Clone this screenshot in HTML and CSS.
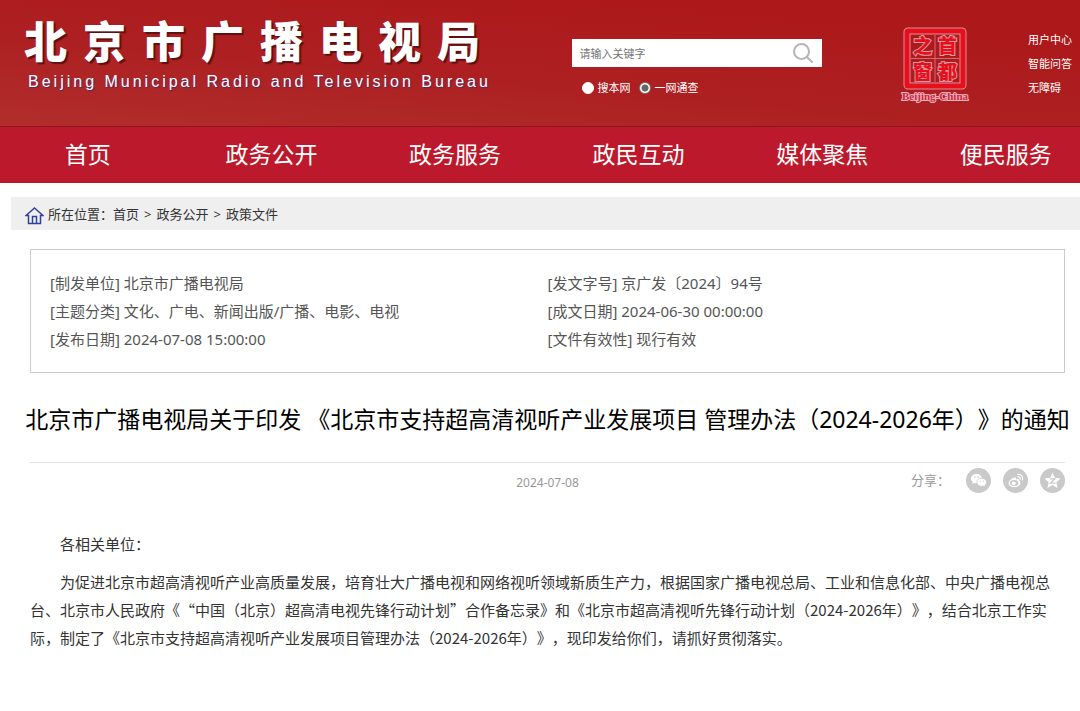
FILE: index.html
```html
<!DOCTYPE html>
<html lang="zh-CN">
<head>
  <meta charset="UTF-8">
  <meta name="viewport" content="width=device-width, initial-scale=1">
  <title>北京市广播电视局</title>
  <link rel="stylesheet" href="styles.css">
</head>
<body>

  <header class="header">
    <div class="brand">
      <div class="brand-cn">北京市广播电视局</div>
      <div class="brand-en">Beijing Municipal Radio and Television Bureau</div>
    </div>

    <form class="search">
      <div class="search-box">
        <input class="search-input" type="text" placeholder="请输入关键字" aria-label="请输入关键字">
        <button class="search-btn" type="button" aria-label="搜索">
          <svg width="22" height="22" viewBox="0 0 22 22" fill="none" stroke="#b5b5b5" stroke-width="2">
            <circle cx="9.500" cy="9.500" r="7.500"/>
            <path d="M15 15l5 5" stroke-linecap="round"/>
          </svg>
        </button>
      </div>
      <div class="search-scope">
        <label><input type="radio" name="scope">搜本网</label>
        <label><input type="radio" name="scope" checked>一网通查</label>
      </div>
    </form>

    <a class="seal" href="#" aria-label="首都之窗">
      <svg width="70" height="78" viewBox="0 0 70 78">
        <rect x="7" y="4" width="56" height="55" rx="1" fill="none" stroke="#dd8d9b" stroke-width="7"/>
        <rect x="7" y="4" width="56" height="55" rx="1" fill="none" stroke="#e60f1c" stroke-width="5"/>
        <path d="M35 8v47M11 31.500h48" fill="none" stroke="#d06a77" stroke-width="1"/>
        <g class="seal-char">
          <text x="13" y="26">之</text>
          <text x="38" y="26">首</text>
          <text x="13" y="52">窗</text>
          <text x="38" y="52">都</text>
        </g>
        <text class="seal-en" x="35" y="73" text-anchor="middle">Beijing-China</text>
      </svg>
    </a>

    <div class="tools">
      <a href="#">用户中心</a>
      <a href="#">智能问答</a>
      <a href="#">无障碍</a>
    </div>
  </header>

  <nav class="nav">
    <a href="#">首页</a>
    <a href="#">政务公开</a>
    <a href="#">政务服务</a>
    <a href="#">政民互动</a>
    <a href="#">媒体聚焦</a>
    <a href="#">便民服务</a>
  </nav>

  <div class="crumbs">
    <svg class="home-icon" width="19" height="18" viewBox="0 0 19 18" fill="none" stroke="#2d429b" stroke-width="1.500">
      <path d="M3.500 8.500H1L9.500 1L18 8.500H15.500V16.500H3.500Z"/>
      <path d="M7.500 16.500V9.500H11.500V16.500"/>
    </svg>
    <span>所在位置：</span>
    <a href="#">首页</a>
    <span class="sep">&gt;</span>
    <a href="#">政务公开</a>
    <span class="sep">&gt;</span>
    <a href="#">政策文件</a>
  </div>

  <main class="article">
    <ul class="meta">
      <li>[制发单位] 北京市广播电视局</li>
      <li>[发文字号] 京广发〔2024〕94号</li>
      <li>[主题分类] 文化、广电、新闻出版/广播、电影、电视</li>
      <li>[成文日期] 2024-06-30 00:00:00</li>
      <li>[发布日期] 2024-07-08 15:00:00</li>
      <li>[文件有效性] 现行有效</li>
    </ul>

    <h1 class="title">北京市广播电视局关于印发 《北京市支持超高清视听产业发展项目 管理办法（2024-2026年）》的通知</h1>

    <div class="info">
      <span class="date">2024-07-08</span>
      <div class="share">
        <span class="share-label">分享：</span>
        <a href="#" aria-label="微信">
          <svg width="25" height="25" viewBox="0 0 25 25">
            <circle cx="12.500" cy="12.500" r="12.500" fill="#c9c9c9"/>
            <path d="M10.500 6C7.400 6 5 8 5 10.600c0 1.400.7 2.600 1.800 3.500L6.300 16l2.200-1.100c.6.200 1.300.3 2 .3 3.100 0 5.500-2 5.500-4.600S13.600 6 10.500 6z" fill="#fff"/>
            <path d="M15.700 10.200c-2.800 0-4.900 1.800-4.900 4s2.100 4 4.900 4c.6 0 1.200-.1 1.700-.3l1.900 1-.5-1.700c1.100-.8 1.700-1.800 1.700-3 0-2.200-2.100-4-4.800-4z" fill="#fff" stroke="#c9c9c9" stroke-width=".7"/>
            <g fill="#c9c9c9"><circle cx="8.700" cy="9.300" r=".8"/><circle cx="12.300" cy="9.300" r=".8"/><circle cx="14.200" cy="13.200" r=".6"/><circle cx="17.300" cy="13.200" r=".6"/></g>
          </svg>
        </a>
        <a href="#" aria-label="微博">
          <svg width="25" height="25" viewBox="0 0 25 25">
            <circle cx="12.500" cy="12.500" r="12.500" fill="#c9c9c9"/>
            <path d="M16 12.700c.5-1.500-.9-2.200-3-1.300.6-1.800-.8-2.600-3-1.400-2.500 1.300-4.500 3.500-4.500 5.300 0 2.300 2.700 3.700 5.600 3.700 3.700 0 6.400-2 6.400-4 0-1.200-.6-1.900-1.500-2.300z" fill="#fff"/>
            <ellipse cx="11.200" cy="15" rx="4.300" ry="2.900" fill="#c9c9c9"/>
            <circle cx="10.700" cy="15.300" r="1.900" fill="#fff"/>
            <path d="M14.500 6.500c3.500-.7 6 2 4.900 5.500M14.900 8.900c1.600-.3 2.700.8 2.200 2.400" fill="none" stroke="#fff" stroke-width="1.200" stroke-linecap="round"/>
          </svg>
        </a>
        <a href="#" aria-label="QQ空间">
          <svg width="25" height="25" viewBox="0 0 25 25">
            <circle cx="12.500" cy="12.500" r="12.500" fill="#c9c9c9"/>
            <path d="M12.500 4.500l2.400 5.200 5.600.7-4.100 3.900 1.100 5.600-5-2.800-5 2.800 1.100-5.600-4.100-3.900 5.600-.7z" fill="#fff"/>
            <path d="M9.800 10.800h5.200l-4.700 4.400h5.200" fill="none" stroke="#c9c9c9" stroke-width="1.200"/>
          </svg>
        </a>
      </div>
    </div>

    <div class="content">
      <p>各相关单位：</p>
      <p>为促进北京市超高清视听产业高质量发展，培育壮大广播电视和网络视听领域新质生产力，根据国家广播电视总局、工业和信息化部、中央广播电视总台、北京市人民政府《“中国（北京）超高清电视先锋行动计划”合作备忘录》和《北京市超高清视听先锋行动计划（2024-2026年）》，结合北京工作实际，制定了《北京市支持超高清视听产业发展项目管理办法（2024-2026年）》，现印发给你们，请抓好贯彻落实。</p>
    </div>
  </main>

</body>
</html>
```

FILE: styles.css
```css
* {
  box-sizing: border-box;
}

body {
  margin: 0;
  background: #fff;
  color: #333;
  font-family: "Noto Sans", "Noto Sans CJK SC", sans-serif;
  font-size: 15px;
  line-height: 28px;
  text-spacing-trim: space-all;
}

a {
  color: inherit;
  text-decoration: none;
}

/* 头部 */
.header {
  display: flex;
  align-items: flex-start;
  height: 126px;
  background: linear-gradient(185deg, #ad191b 20%, #ad2022 60%, #b12e2b 100%);
  color: #fff;
}

.brand {
  flex: none;
  width: 53%;
  padding: 12px 0 0 24px;
}

.brand-cn {
  font-family: "Noto Sans CJK SC", sans-serif;
  font-size: 43px;
  font-weight: 900;
  line-height: 54px;
  letter-spacing: 16px;
  white-space: nowrap;
  text-shadow: 2px 2px 1px #5c1013;
}

.brand-en {
  padding: 4px 0 0 4px;
  font-family: "Liberation Sans", Arial, sans-serif;
  font-size: 16px;
  line-height: 24px;
  letter-spacing: 3px;
  white-space: nowrap;
  text-shadow: 1px 1px 1px #4b2a66;
}

.search {
  flex: none;
  width: 250px;
  padding-top: 39px;
}

.search-box {
  display: flex;
  height: 28px;
  background: #fff;
}

.search-input {
  flex: 1;
  min-width: 0;
  padding: 0 7px;
  border: 0;
  background: none;
  font-family: inherit;
  font-size: 11px;
}

.search-input::placeholder {
  color: #757575;
}

.search-btn {
  display: flex;
  align-items: center;
  padding: 0 8px 0 0;
  border: 0;
  background: none;
  cursor: pointer;
}

.search-scope {
  display: flex;
  gap: 9px;
  padding: 10px 0 0 10px;
  font-size: 11px;
  line-height: 22px;
}

.search-scope label {
  display: flex;
  align-items: center;
  gap: 3px;
}

.search-scope input {
  appearance: none;
  width: 12px;
  height: 12px;
  margin: 0;
  border: 1px solid #fff;
  border-radius: 50%;
  background: #fff;
}

.search-scope input:checked {
  border-color: #767676;
  background: radial-gradient(#666 45%, #fff 55%);
}

.seal {
  margin: 27px 58px 0 auto;
}

.seal svg {
  display: block;
}

.seal-char {
  font-family: "Noto Sans CJK SC", sans-serif;
  font-size: 19px;
  font-weight: 900;
  fill: #e60f1c;
  stroke: #e09aa5;
  stroke-width: 2px;
  paint-order: stroke;
}

.seal-en {
  font-family: "Liberation Serif", serif;
  font-size: 11px;
  font-weight: bold;
  fill: #d6263b;
  stroke: #e6b3c0;
  stroke-width: 2px;
  paint-order: stroke;
}

.tools {
  display: flex;
  flex: none;
  flex-direction: column;
  padding: 28px 8px 0 0;
  font-size: 11px;
  line-height: 24px;
}

/* 导航 */
.nav {
  display: grid;
  grid-template-columns: repeat(6, 17%);
  height: 57px;
  border-top: 1px solid #8f1420;
  background: #bc1a2c;
  color: #fff;
  font-size: 23px;
  line-height: 54px;
  text-align: center;
  overflow: hidden;
}

.nav a {
  margin: 0 4px 0 -4px;
}

/* 当前位置 */
.crumbs {
  display: flex;
  align-items: center;
  margin: 14px 0 0 11px;
  padding: 1px 0 0 14px;
  background: #efefef;
  font-size: 13px;
  line-height: 32px;
}

.home-icon {
  margin: 3px 4px 0 0;
}

.sep {
  padding: 0 5px;
}

/* 正文 */
.article {
  padding: 19px 15px 40px 30px;
}

.meta {
  display: grid;
  grid-template-columns: 1fr 1fr;
  margin: 0;
  padding: 19px;
  border: 1px solid #ccc;
  color: #555;
  list-style: none;
}

.title {
  margin: 26px -15px 0;
  color: #000;
  font-size: 23px;
  font-weight: normal;
  line-height: 40px;
  text-align: center;
}

.info {
  display: grid;
  grid-template-columns: 1fr auto 1fr;
  margin-top: 23px;
  padding-top: 5px;
  border-top: 1px solid #e3e3e3;
  color: #999;
}

.date {
  grid-column: 2;
  font-size: 12px;
  line-height: 30px;
}

.share {
  display: flex;
  justify-content: flex-end;
  gap: 12px;
}

.share svg {
  display: block;
}

.share-label {
  margin-right: 4px;
  font-size: 13px;
  line-height: 25px;
}

.content {
  margin-top: 32px;
  font-family: "Noto Sans CJK SC", sans-serif;
}

.content p {
  margin: 0 0 10px;
  text-indent: 30px;
}
```
